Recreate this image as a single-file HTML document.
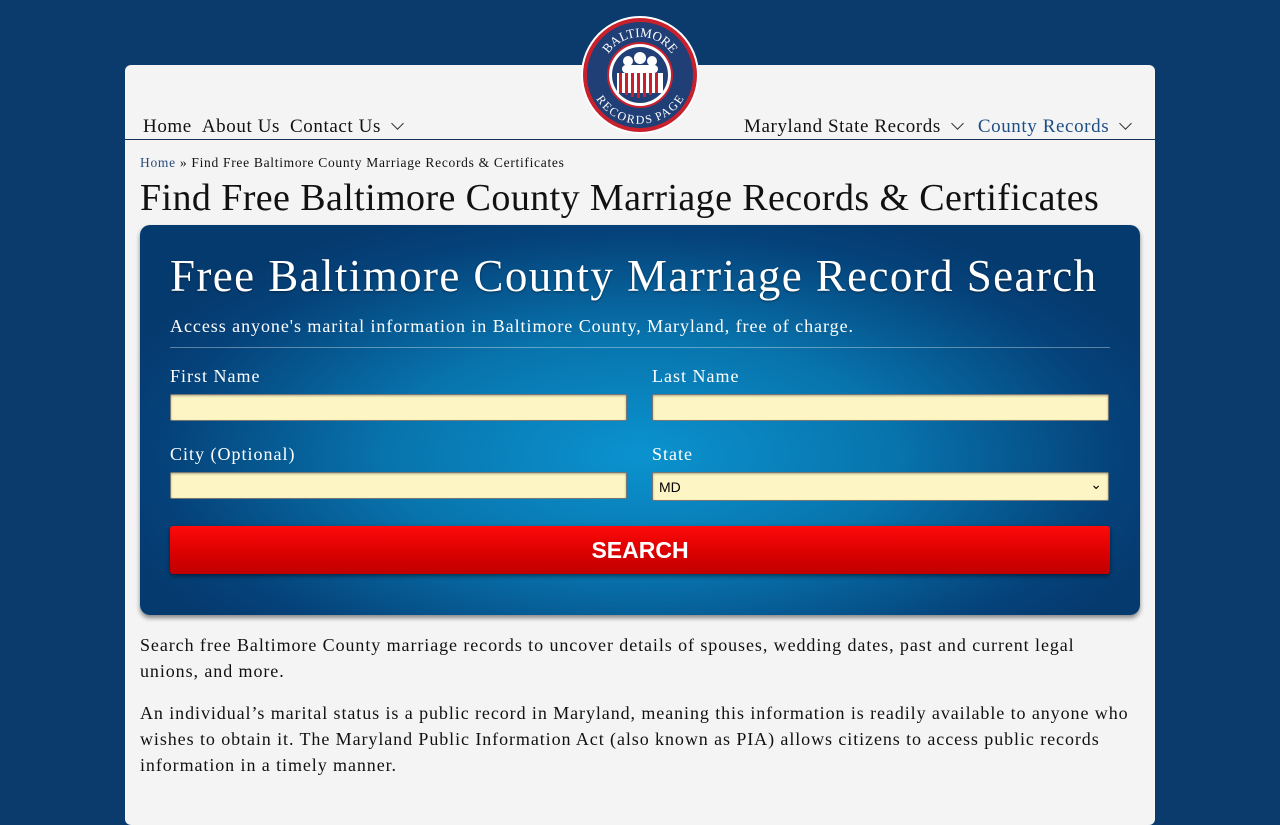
<!DOCTYPE html>
<html><head><meta charset="utf-8"><style>
*{box-sizing:border-box;margin:0;padding:0}
body{width:1280px;height:800px;overflow:hidden;background:#0b3b6d;font-family:"Liberation Serif",serif;color:#111}
.wrap{position:absolute;left:125px;top:65px;width:1030px;height:760px;background:#f4f4f4;border-radius:6px}
.nav{position:absolute;top:116px;font-size:19px;color:#111;white-space:nowrap;letter-spacing:.6px}
.nav span{margin-right:10px}
.chev{display:inline-block;width:9px;height:9px;border-right:1.3px solid #333;border-bottom:1.3px solid #333;transform:rotate(45deg);margin:0 6px 4px 12px}
.line{position:absolute;left:125px;top:139px;width:1030px;height:1px;background:#17335a}
.bc{position:absolute;left:140px;top:155px;font-size:13.5px;letter-spacing:.7px;white-space:nowrap}
.bc a{color:#2a4d7a}
h1{position:absolute;left:140px;top:176px;font-size:38px;font-weight:normal;letter-spacing:.4px;white-space:nowrap}
.panel{position:absolute;left:140px;top:225px;width:1000px;height:390px;border-radius:10px;background:radial-gradient(ellipse 560px 260px at 500px 230px,#0b93cf 0%,#0874ad 45%,#05427a 85%,#053a6e 100%);box-shadow:0 3px 5px rgba(0,0,0,.45);color:#fff}
.panel h2{position:absolute;left:30px;top:25px;font-size:45px;font-weight:normal;letter-spacing:1.4px;white-space:nowrap;text-shadow:0 1px 2px rgba(0,0,0,.4)}
.panel p{position:absolute;left:30px;top:91px;font-size:18px;letter-spacing:.95px;white-space:nowrap}
.hr{position:absolute;left:30px;top:122px;width:940px;height:1px;background:rgba(255,255,255,.35)}
.lbl{position:absolute;font-size:18px;letter-spacing:1px}
.inp{position:absolute;width:457px;height:27px;background:#fdf6c4;border:1px solid #777;border-radius:2px;box-shadow:inset 0 1px 2px rgba(0,0,0,.3)}
.sel{font-family:"Liberation Sans",sans-serif;font-size:14px;color:#000;padding:6px 0 0 6px}
.btn{position:absolute;left:30px;top:301px;width:940px;height:48px;background:linear-gradient(#ff0a0a,#d80000 60%,#c00000);border-radius:3px;box-shadow:0 2px 4px rgba(0,0,0,.5);font-family:"Liberation Sans",sans-serif;font-weight:bold;font-size:23px;text-align:center;line-height:48px;color:#fff}
.txt{position:absolute;left:140px;width:1000px;font-size:18px;line-height:26px;letter-spacing:.92px}
</style></head><body>
<div class="wrap"></div>
<div class="nav" style="left:143px"><span>Home</span><span>About Us</span><span style="margin:0">Contact Us</span><i class="chev"></i></div>
<div class="nav" style="left:744px"><span style="margin:0">Maryland State Records</span><i class="chev"></i><span style="margin:0 0 0 10px;color:#1d4e84">County Records</span><i class="chev"></i></div>
<div class="line"></div>
<svg style="position:absolute;left:580px;top:15px" width="120" height="120" viewBox="0 0 120 120">
<defs><path id="ta" d="M22 60 A38 38 0 0 1 98 60"/><path id="tb" d="M18 58 A42 42 0 0 0 102 58"/></defs>
<circle cx="60" cy="60" r="59" fill="#fff"/>
<circle cx="60" cy="60" r="57" fill="#c8202c"/>
<circle cx="60" cy="60" r="53" fill="#1f3f76"/>
<circle cx="60" cy="60" r="33" fill="#c8202c"/>
<circle cx="60" cy="60" r="31" fill="#fff"/>
<circle cx="60" cy="60" r="28" fill="#1f3f76"/>
<rect x="37" y="58" width="46" height="20" fill="#fff"/>
<g fill="#c8202c"><rect x="39" y="58" width="3" height="20"/><rect x="45" y="58" width="3" height="22"/><rect x="51" y="58" width="3" height="24"/><rect x="57" y="58" width="3" height="25"/><rect x="63" y="58" width="3" height="24"/><rect x="69" y="58" width="3" height="22"/><rect x="75" y="58" width="3" height="20"/></g>
<g fill="#fff"><circle cx="48" cy="46" r="5"/><circle cx="60" cy="43" r="6"/><circle cx="72" cy="46" r="5"/><rect x="42" y="50" width="36" height="8" rx="4"/></g>
<text font-family="Liberation Serif" font-size="13" fill="#fff"><textPath href="#ta" startOffset="50%" text-anchor="middle">BALTIMORE</textPath></text>
<text font-family="Liberation Serif" font-size="12" fill="#fff"><textPath href="#tb" startOffset="50%" text-anchor="middle" dominant-baseline="hanging">RECORDS PAGE</textPath></text>
</svg>
<div class="bc"><a>Home</a> » Find Free Baltimore County Marriage Records &amp; Certificates</div>
<h1>Find Free Baltimore County Marriage Records &amp; Certificates</h1>
<div class="panel">
<h2>Free Baltimore County Marriage Record Search</h2>
<p>Access anyone's marital information in Baltimore County, Maryland, free of charge.</p>
<div class="hr"></div>
<div class="lbl" style="left:30px;top:141px">First Name</div>
<div class="lbl" style="left:512px;top:141px">Last Name</div>
<div class="inp" style="left:30px;top:169px"></div>
<div class="inp" style="left:512px;top:169px"></div>
<div class="lbl" style="left:30px;top:219px">City (Optional)</div>
<div class="lbl" style="left:512px;top:219px">State</div>
<div class="inp" style="left:30px;top:247px"></div>
<div class="inp sel" style="left:512px;top:247px;height:29px">MD<span style="position:absolute;right:6px;top:3px">⌄</span></div>
<div class="btn">SEARCH</div>
</div>
<div class="txt" style="top:632px">Search free Baltimore County marriage records to uncover details of spouses, wedding dates, past and current legal<br>unions, and more.</div>
<div class="txt" style="top:700px">An individual’s marital status is a public record in Maryland, meaning this information is readily available to anyone who wishes to obtain it. The Maryland Public Information Act (also known as PIA) allows citizens to access public records information in a timely manner.</div>
</body></html>
